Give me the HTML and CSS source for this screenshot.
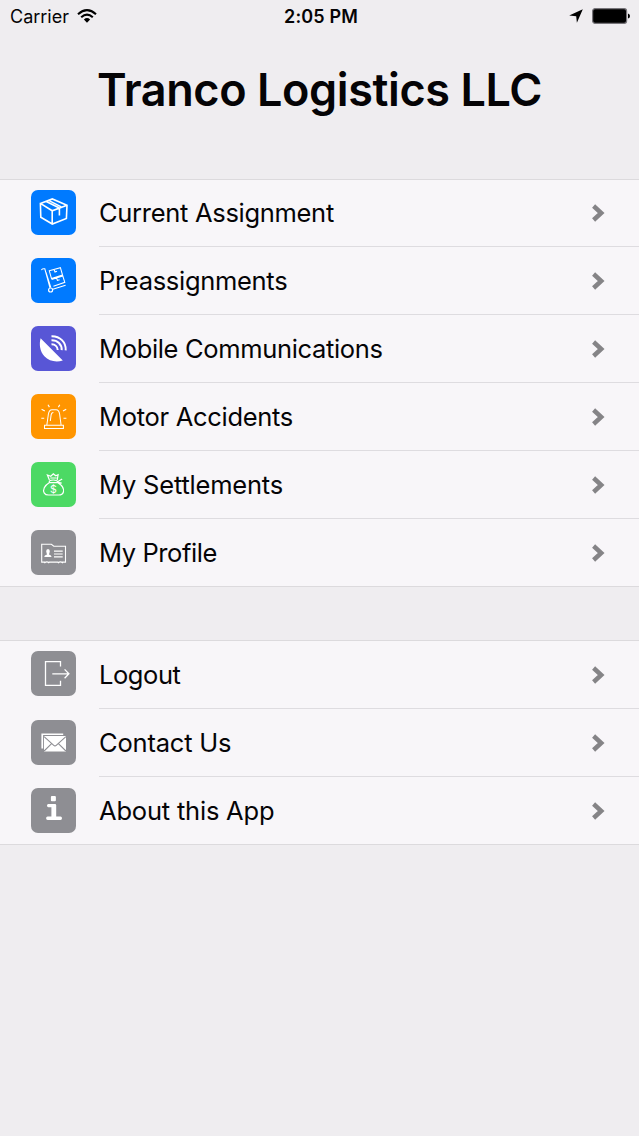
FILE: index.html
```html
<!DOCTYPE html>
<html lang="en">
<head>
<meta charset="utf-8">
<title>Tranco Logistics LLC</title>
<link rel="stylesheet" href="styles.css">
</head>
<body>
<svg class="defs" aria-hidden="true"><symbol id="chevron" viewBox="0 0 14 20"><path d="M2.6 3 10.2 10 2.6 17" fill="none" stroke="#858487" stroke-width="4.5"/></symbol></svg>
<header class="status">
  <div class="status-left"><span class="carrier">Carrier</span>
    <svg class="wifi" viewBox="0 0 20 14"><g fill="none" stroke="#000" stroke-width="2.1"><path d="M1 5.2Q10-2.9 19 5.2M4.2 8.2Q10 2.9 15.8 8.2"/></g><path d="M6.9 10.5Q10 7.6 13.1 10.5L10 13.7Z"/></svg>
  </div>
  <span class="time">2:05 PM</span>
  <div class="status-right">
    <svg class="location" viewBox="0 0 14 14"><path d="M13.8.2 7.9 13.8 7.2 7.2.2 6.6Z"/></svg>
    <svg class="battery" viewBox="0 0 38 16"><rect x=".6" y=".6" width="34" height="14.8" rx="2.6" fill="#000" stroke="#77757a" stroke-width="1.2"/><path d="M36 5.5q2 .5 2 2.5t-2 2.5Z"/></svg>
  </div>
</header>
<h1 class="title">Tranco Logistics LLC</h1>
<nav class="group main-group">
  <a class="row"><svg class="tile blue" viewBox="0 0 45 45"><path d="M9.4 13.4 21.3 8.9 36 15.2 35.4 28.5 21.3 34 9.8 27.2ZM9.4 13.4 21.2 20.8 36 15.2M21.2 20.8V33.5M14.8 11.2 28.4 18V25.5M17.6 10.4 30.2 16.9" stroke-width="1.6"/></svg><span class="label current">Current Assignment</span><svg class="chevron"><use href="#chevron"/></svg></a>
  <a class="row"><svg class="tile blue" viewBox="0 0 45 45"><path d="M10.5 12.2Q10.8 10.3 13.8 10.8L19 29.8M15 14.5 19.8 29.5M21.8 31.2 34.6 27.2M18.3 12.8 29.4 9.7 31.5 17 20.5 20.6ZM20.7 21.5 31.8 18 33.8 24.3 22.4 28.2M23.2 11.5 24 14 26 13.3M25.6 20 26.4 22.4 28.6 21.7" stroke-width="1.05"/><circle cx="19.6" cy="32" r="2" stroke-width="1.2"/></svg><span class="label preassign">Preassignments</span><svg class="chevron"><use href="#chevron"/></svg></a>
  <a class="row"><svg class="tile purple" viewBox="0 0 45 45"><path class="solid" d="M9.6 12.2 31.8 34.4C25.5 36.5 18 35.3 13.4 30.2 8.8 25.2 8 18 9.6 12.2Z"/><path d="M20.5 10.2C29 10 35.2 16.2 34.7 24.4M20.5 14.2C26.5 14 31 18.5 30.7 24.1M20.5 18.3C24 18.2 26.7 20.7 26.7 24" stroke-width="2"/></svg><span class="label mobile">Mobile Communications</span><svg class="chevron"><use href="#chevron"/></svg></a>
  <a class="row"><svg class="tile orange" viewBox="0 0 45 45"><path d="M13.5 31.3H32.4V34.4H13.5ZM15.8 31.2 17.4 20Q18.1 15.7 21 15.7H25.1Q28 15.7 28.6 20L30.1 31.2M19.3 27 20.1 21Q20.5 18.4 22.4 18.4" stroke-width="1.05"/><path d="M17 10.8 18.4 13.1M28.8 10.8 27.4 13.1M10.6 15.3 13.8 17.1M35.2 15.3 32 17.1M10.3 24.2H13.2M32.5 24.2H35.4" stroke-width="1.1"/></svg><span class="label motor">Motor Accidents</span><svg class="chevron"><use href="#chevron"/></svg></a>
  <a class="row"><svg class="tile green" viewBox="0 0 45 45"><path d="M18.2 20.7C13.5 23.4 11.4 28 13.3 31.1 14.3 32.7 15.9 33 17.5 33H27.7C30.1 33 31.9 32 32.4 30 33.2 26.8 30.7 23 26.9 20.7ZM18.4 18 16.4 13 19.8 14.2 22.3 11.9 24.8 13.8 27.1 12.8 26.2 18.1M18.2 20.3Q18.1 18 22.2 18T27 20.5M27 19.5 31.2 17M27 20.3 30.7 21.2M19.3 16H25.7" stroke-width="1.2"/><text x="22.3" y="30.5" text-anchor="middle" class="dollar">$</text></svg><span class="label settlements">My Settlements</span><svg class="chevron"><use href="#chevron"/></svg></a>
  <a class="row"><svg class="tile gray" viewBox="0 0 45 45"><path d="M14 32.1H10.7V14.3H20.4L22.8 16.2H34.5V32.1H31.1M17.7 32.1H27.4M13.4 33.1Q15.8 30.7 18.2 33.1M27 33.1Q29.4 30.7 31.8 33.1" stroke-width="1.1"/><path d="M23 21.1H31.7M23 24H31.7M23 26.8H31.7" stroke-width="1.15"/><path class="solid" d="M13.2 27Q13.2 25.1 16 24.4L15.2 21.5Q15 19 17 19T18.8 21.5L18 24.4Q20.6 25.1 20.6 27Z"/></svg><span class="label profile">My Profile</span><svg class="chevron"><use href="#chevron"/></svg></a>
</nav>
<nav class="group second-group">
  <a class="row"><svg class="tile gray" viewBox="0 0 45 45"><path d="M29.5 15.6V10.7H14.5V34.3H29.5V29.8M21.3 22.8H37.8M33.6 18.4 37.9 22.8 33.6 27.2" stroke-width="1.3"/></svg><span class="label logout">Logout</span><svg class="chevron"><use href="#chevron"/></svg></a>
  <a class="row"><svg class="tile gray" viewBox="0 0 45 45"><path class="solid" d="M10.4 13.4H32.2V15.1H12.1V28.6H10.4ZM13 16.1H35V31.6H13Z"/><path class="fold" d="M13.1 16.6 22.5 25.2Q24 26.6 25.5 25.2L34.9 16.6M13.1 31 20.6 23.7M34.9 31 27.4 23.7"/></svg><span class="label contact">Contact Us</span><svg class="chevron"><use href="#chevron"/></svg></a>
  <a class="row"><svg class="tile gray" viewBox="0 0 45 45"><rect class="solid" x="19.9" y="8" width="5" height="5.2" rx="1"/><path class="solid" d="M17.4 15.9H24Q25.2 15.9 25.2 17.1V28.5H29.5Q31 28.5 31 30.2T29.5 31.9H16.6Q15.1 31.9 15.1 30.2T16.6 28.5H20.4V19.2H17.4Q16 19.2 16 17.5T17.4 15.9Z"/></svg><span class="label about">About this App</span><svg class="chevron"><use href="#chevron"/></svg></a>
</nav>
</body>
</html>
```
FILE: styles.css
```css
* { box-sizing: border-box; }
body {
  margin: 0;
  min-height: 1136px;
  background: #efedf0;
  color: #050406;
  font-family: Inter, "Liberation Sans", sans-serif;
}
svg { display: block; flex: none; }
.defs { width: 0; height: 0; position: absolute; }
.status {
  display: grid;
  grid-template-columns: 1fr auto 1fr;
  align-items: center;
  height: 32px;
  padding: 0 9px 0 10px;
  font-size: 18px;
  line-height: 32px;
}
.status-left, .status-right { display: flex; align-items: center; }
.status-left { gap: 8px; }
.status-right { justify-content: flex-end; gap: 9px; }
.carrier, .time { padding-top: 1px; line-height: 31px; }
.wifi { width: 20px; height: 14px; }
.time { font-weight: 600; font-size: 18px; letter-spacing: 0.15px; padding-left: 2px; }
.location { width: 14px; height: 14px; }
.battery { width: 38px; height: 16px; }
.title {
  margin: 0;
  height: 147px;
  padding-top: 30px;
  text-align: center;
  font-size: 45px;
  line-height: 56px;
  font-weight: 600;
  letter-spacing: -0.4px;
  white-space: nowrap;
}
.group {
  background: #f8f6f9;
  border-top: 1px solid #dcdadd;
  border-bottom: 1px solid #dcdadd;
}
.second-group { margin-top: 53px; }
.row {
  display: grid;
  grid-template-columns: 45px 1fr 14px;
  column-gap: 23px;
  align-items: center;
  height: 68px;
  padding: 0 34px 1px 31px;
  background: linear-gradient(#dedce0, #dedce0) 99px 100% / 100% 1px no-repeat;
}
.row:first-child { height: 67px; padding-bottom: 2px; }
.row:last-child { height: 67px; padding-bottom: 0; background: none; }
.main-group .row:last-child { padding-bottom: 1px; }
.second-group .row:first-child { height: 68px; padding-bottom: 3px; }
.second-group .row { padding-bottom: 2px; }
.second-group .row:last-child { padding-bottom: 1px; }
.second-group .label,
.second-group .chevron,
.main-group .row:last-child .label,
.main-group .row:last-child .chevron { margin-top: 2px; }
.tile {
  width: 45px;
  height: 45px;
  border-radius: 7px;
  fill: none;
  stroke: #fff;
}
.blue { background: #007aff; }
.purple { background: #5856d6; }
.orange { background: #ff9500; }
.green { background: #4cd964; }
.gray { background: #8e8e93; }
.solid { fill: #fff; stroke: none; }
.fold { stroke: #8e8e93; stroke-width: 1.1; }
.dollar { fill: #fff; stroke: none; font-size: 10.5px; }
.label { font-size: 25.5px; line-height: 36px; letter-spacing: -0.3px; white-space: nowrap; }
.mobile { letter-spacing: -0.34px; }
.settlements, .contact, .about { letter-spacing: -0.2px; }
.profile, .logout { letter-spacing: -0.42px; }
.chevron { width: 14px; height: 20px; }
```
